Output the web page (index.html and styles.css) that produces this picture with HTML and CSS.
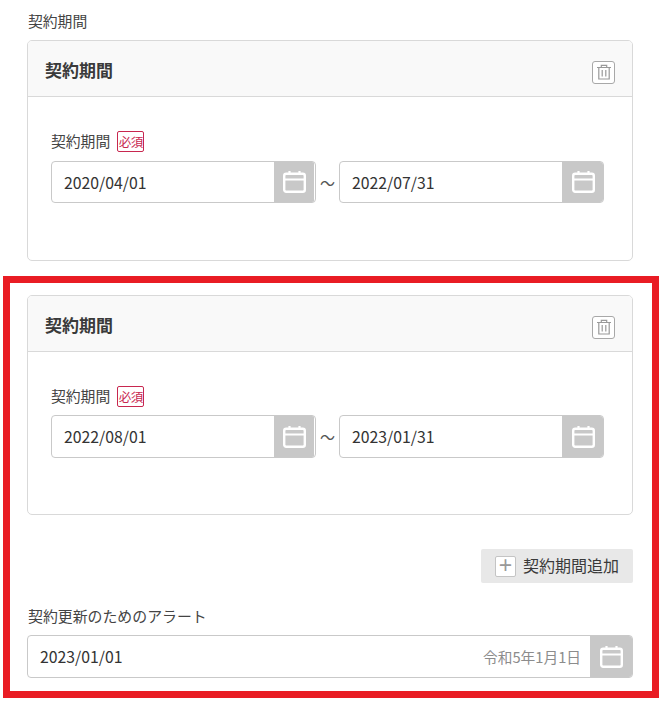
FILE: index.html
```html
<!DOCTYPE html>
<html lang="ja">
<head>
<meta charset="utf-8">
<title>契約期間</title>
<link rel="stylesheet" href="styles.css">
</head>
<body>
<svg class="defs" width="0" height="0" aria-hidden="true">
  <symbol id="cal" viewBox="0 0 23 22">
    <path d="M6.500 0v4M16.500 0v4" fill="none" stroke="currentColor" stroke-width="2.200"/>
    <rect x="1.200" y="2.800" width="20.600" height="18" rx="2" fill="none" stroke="currentColor" stroke-width="2.400"/>
    <path d="M1 8.500h21" fill="none" stroke="currentColor" stroke-width="1.800"/>
  </symbol>
  <symbol id="trash" viewBox="0 0 16 16">
    <path d="M1 3.500h14M5.300 3.500v-2.200h5.400v2.200M2.800 3.500v11.500h10.400v-11.500M6.200 6v6.500M9.800 6v6.500" fill="none" stroke="currentColor" stroke-width="1.200"/>
  </symbol>
</svg>
<main class="page">
  <div class="section-label">契約期間</div>
  <section class="card">
    <header class="card-head">
      <h2 class="card-title">契約期間</h2>
      <button class="trash-btn" type="button" aria-label="削除"><svg class="trash-icon"><use href="#trash"/></svg></button>
    </header>
    <div class="card-body">
      <div class="field-label">契約期間<span class="badge">必須</span></div>
      <div class="range">
        <div class="date date-start"><span class="date-value">2020/04/01</span><span class="cal-btn"><svg class="cal-icon"><use href="#cal"/></svg></span></div>
        <span class="tilde">～</span>
        <div class="date"><span class="date-value">2022/07/31</span><span class="cal-btn"><svg class="cal-icon"><use href="#cal"/></svg></span></div>
      </div>
    </div>
  </section>
</main>
<div class="frame">
  <section class="card card-second">
    <header class="card-head">
      <h2 class="card-title">契約期間</h2>
      <button class="trash-btn" type="button" aria-label="削除"><svg class="trash-icon"><use href="#trash"/></svg></button>
    </header>
    <div class="card-body">
      <div class="field-label">契約期間<span class="badge">必須</span></div>
      <div class="range">
        <div class="date date-start"><span class="date-value">2022/08/01</span><span class="cal-btn"><svg class="cal-icon"><use href="#cal"/></svg></span></div>
        <span class="tilde">～</span>
        <div class="date"><span class="date-value">2023/01/31</span><span class="cal-btn"><svg class="cal-icon"><use href="#cal"/></svg></span></div>
      </div>
    </div>
  </section>
  <div class="add-row">
    <button class="add-btn" type="button"><span class="plus">+</span><span class="add-text">契約期間追加</span></button>
  </div>
  <div class="alert-label">契約更新のためのアラート</div>
  <div class="date date-wide">
    <span class="date-value date-value-wide">2023/01/01</span>
    <span class="era">令和5年1月1日</span>
    <span class="cal-btn cal-btn-wide"><svg class="cal-icon"><use href="#cal"/></svg></span>
  </div>
</div>
</body>
</html>
```
FILE: styles.css
```css
* { box-sizing: border-box; }
html, body { margin: 0; padding: 0; background: #fff; }
body {
  font-family: "Noto Sans CJK JP", "Noto Sans", sans-serif;
  color: #333;
  overflow: hidden;
}
.defs { display: block; height: 0; }
.page { padding: 10px 29px 0 27px; }
.section-label {
  font-size: 14.800px;
  line-height: 22px;
  margin-left: 1px;
  margin-bottom: 8px;
  color: #444;
}
.card {
  border: 1px solid #d9d9d9;
  border-radius: 5px;
  height: 221px;
  background: #fff;
}
.card-second { height: 220px; }
.card-head {
  height: 56px;
  background: #f9f9f9;
  border-bottom: 1px solid #d9d9d9;
  border-radius: 4px 4px 0 0;
  display: flex;
  align-items: center;
  justify-content: space-between;
  padding: 0 17px;
}
.card-title {
  margin: 2px 0 0;
  font-size: 17px;
  font-weight: 700;
  color: #3a3a3a;
}
.trash-btn {
  width: 23px;
  height: 23px;
  margin-top: 7px;
  padding: 0;
  border: 1px solid #a8a8a8;
  border-radius: 3px;
  background: #fff;
  display: flex;
  align-items: center;
  justify-content: center;
  color: #999;
}
.trash-icon { width: 16px; height: 16px; }
.card-body { padding: 33px 28px 0 23px; }
.field-label {
  display: flex;
  align-items: center;
  font-size: 14.800px;
  line-height: 22px;
  color: #444;
  height: 22px;
  margin-bottom: 9px;
}
.card-second .field-label { margin-bottom: 8px; }
.badge {
  margin-left: 7px;
  width: 27px;
  height: 21px;
  border: 1px solid #c8274f;
  border-radius: 2px;
  color: #c8274f;
  font-size: 12.500px;
  line-height: 19px;
  text-align: center;
  letter-spacing: -0.5px;
}
.range { display: flex; align-items: stretch; }
.date {
  flex: 0 0 265px;
  height: 42px;
  border: 1px solid #c9c9c9;
  border-radius: 4px;
  display: flex;
  align-items: center;
  overflow: hidden;
  background: #fff;
}
.card-second .date { height: 43px; }
.date-value {
  flex: 1;
  padding-left: 12px;
  font-size: 15.800px;
  color: #333;
}
.card-second .date-value, .date-wide .date-value { padding-bottom: 1px; }
.cal-btn {
  flex: 0 0 42px;
  align-self: stretch;
  margin: -1px -1px -1px 0;
  background: #c8c8c8;
  color: #fff;
  display: flex;
  align-items: center;
  justify-content: center;
}
.date-start .cal-btn { margin-right: 1px; flex-basis: 40px; }
.cal-icon { width: 23px; height: 22px; }
.tilde {
  flex: 0 0 23px;
  display: flex;
  align-items: center;
  justify-content: center;
  font-size: 15px;
  color: #555;
}
.frame {
  margin: 15px 3px 0;
  width: 656px;
  height: 422px;
  border: 7px solid #e91c24;
  padding: 12px 19px 0 17px;
}
.add-row {
  display: flex;
  justify-content: flex-end;
  margin-top: 34px;
}
.add-btn {
  width: 152px;
  height: 34px;
  border: 0;
  border-radius: 2px;
  background: #e8e8e8;
  color: #3a3a3a;
  font: inherit;
  font-size: 16px;
  display: flex;
  align-items: center;
  padding: 0 0 0 14px;
}
.add-text { padding-bottom: 2px; }
.plus {
  width: 21px;
  height: 21px;
  margin-right: 7px;
  border: 1px solid #c4c4c4;
  border-radius: 2px;
  background: #fff;
  color: #999;
  font-size: 23px;
  font-weight: 400;
  line-height: 17px;
  text-align: center;
  font-family: "Liberation Sans", sans-serif;
}
.alert-label {
  margin-top: 22px;
  margin-left: 1px;
  font-size: 14.900px;
  line-height: 22px;
  color: #444;
}
.date-wide {
  width: 606px;
  height: 43px;
  margin-top: 8px;
}
.era {
  font-size: 14.700px;
  color: #8c8c8c;
  margin-right: 9px;
  padding-bottom: 1px;
}
.cal-btn-wide { flex-basis: 43px; }
```
